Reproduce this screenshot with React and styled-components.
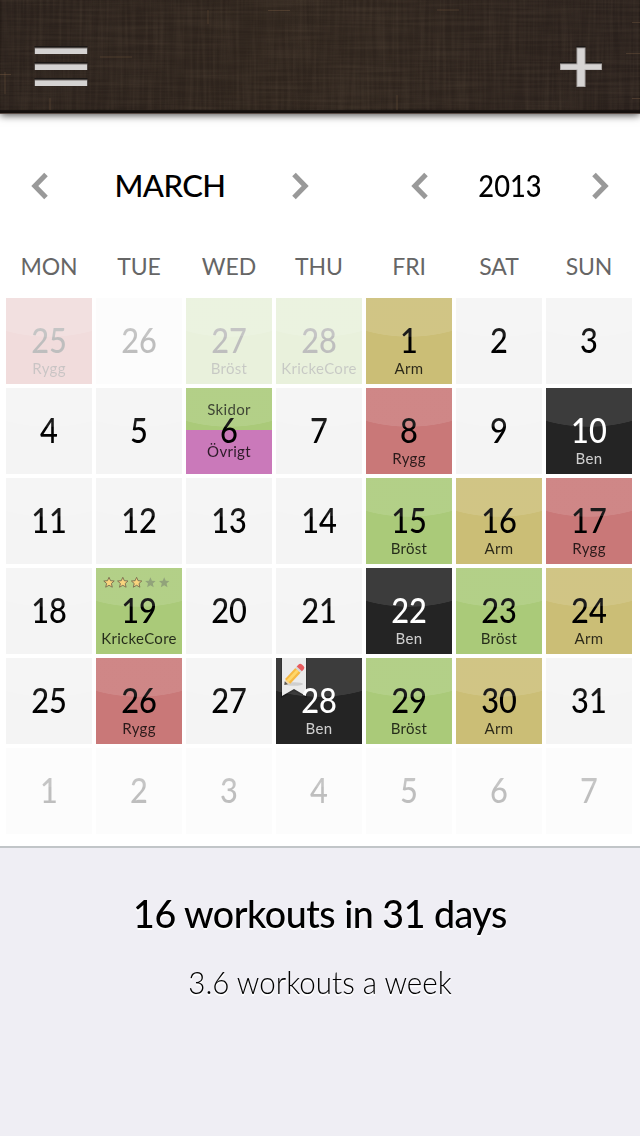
import React from 'react';
import styled, { createGlobalStyle, css } from 'styled-components';

const GlobalStyle = createGlobalStyle`
  body {
    margin: 0;
    background: #fff;
    font-family: Lato, 'Open Sans', sans-serif;
  }
`;

const COLORS = {
  red: '#c97878',
  green: '#aaca79',
  gold: '#cbbe76',
  black: '#242424',
  purple: '#ca79ba',
  none: '#f4f4f4',
};

const Page = styled.div`
  width: 640px;
  height: 1136px;
  display: flex;
  flex-direction: column;
  overflow: hidden;
`;

const Header = styled.header`
  position: relative;
  z-index: 1;
  box-sizing: border-box;
  height: 114px;
  flex: none;
  display: flex;
  align-items: flex-start;
  justify-content: space-between;
  padding: 46px 37px 0 34px;
  background: linear-gradient(90deg, #2a211c, #2e241d 40%, #2f251e 55%, #29201c);
  border-bottom: 1px solid #594c47;
  box-shadow: 0 1px 8px rgba(0, 0, 0, 0.75), inset 0 -3px 2px #15100e;
`;

const Texture = styled.svg`
  position: absolute;
  top: 0;
  left: 0;
`;

const HeaderIcon = styled.svg`
  position: relative;
`;

const Pickers = styled.div`
  height: 80px;
  margin-top: 32px;
  display: flex;
  justify-content: space-between;
`;

const Picker = styled.div`
  width: ${props => props.$width}px;
  display: grid;
  grid-template-columns: 80px 1fr 80px;
  align-items: center;
  justify-items: center;
`;

const PickerValue = styled.div`
  padding-bottom: 2px;
  font-size: 31px;
  line-height: 38px;
  font-weight: 500;
  letter-spacing: ${props => props.$spacing}px;
  white-space: nowrap;
  transform: scaleX(${props => props.$stretch || 1});
`;

const columns = css`
  display: grid;
  grid-template-columns: repeat(7, 86px);
  gap: 4px;
  padding-left: 6px;
`;

const Weekdays = styled.div`
  ${columns}
  height: 72px;
`;

const Weekday = styled.div`
  padding-top: 26px;
  font-size: 23px;
  line-height: 28px;
  letter-spacing: -0.1px;
  text-align: center;
  color: #666;
`;

const Days = styled.div`
  ${columns}
  grid-auto-rows: 86px;
  height: 548px;
  flex: none;
`;

const Cell = styled.div`
  position: relative;
  box-sizing: border-box;
  padding-top: 22px;
  text-align: center;
  background: ${props => props.$split
    ? `linear-gradient(${COLORS[props.$color]} 42px, ${COLORS[props.$split]} 42px)`
    : COLORS[props.$color]};
  color: ${props => props.$color === 'black' ? '#fff' : '#000'};
  opacity: ${props => props.$faded ? 0.25 : 1};

  &::after {
    content: '';
    position: absolute;
    inset: 0;
    background: radial-gradient(ellipse 100px 60px at 50% -21px, rgba(255, 255, 255, 0.11) 99%, transparent 100%);
  }
`;

const Num = styled.div`
  position: relative;
  font-size: 35px;
  line-height: 39px;
  font-weight: 500;
  transform: scaleX(0.88);
`;

const Label = styled.div`
  font-size: 15px;
  line-height: 18px;
  letter-spacing: 0.3px;
  opacity: 0.78;
`;

const SplitLabels = styled.div`
  position: absolute;
  inset: 12px 0 0;
  display: flex;
  flex-direction: column;
  gap: 24px;
`;

const Stars = styled.svg`
  position: absolute;
  top: 8px;
  left: 7px;
`;

const Ribbon = styled.svg`
  position: absolute;
  top: 0;
  left: 4px;
`;

const Summary = styled.section`
  flex: 1;
  border-top: 2px solid #c1c5c8;
  background: #efeef4;
  text-align: center;
  text-shadow: 0 2px 0 #fff;
`;

const Total = styled.div`
  margin-top: 41px;
  font-size: 39px;
  line-height: 48px;
  font-weight: 500;
  letter-spacing: -0.5px;
  transform: scaleX(0.963);
`;

const Average = styled.div`
  margin-top: 26px;
  font-size: 31px;
  line-height: 38px;
  font-weight: 300;
  transform: scaleX(0.953);
`;

const STAR = 'M0-5.2 1.5-1.8 5.2-1.5 2.4 1 3.3 4.7 0 2.8-3.3 4.7-2.4 1-5.2-1.5-1.5-1.8Z';

const WEEKDAYS = ['MON', 'TUE', 'WED', 'THU', 'FRI', 'SAT', 'SUN'];

const WORKOUTS = {
  1: ['gold', 'Arm'],
  6: ['green', 'Skidor', 'purple', 'Övrigt'],
  8: ['red', 'Rygg'],
  10: ['black', 'Ben'],
  15: ['green', 'Bröst'],
  16: ['gold', 'Arm'],
  17: ['red', 'Rygg'],
  19: ['green', 'KrickeCore'],
  22: ['black', 'Ben'],
  23: ['green', 'Bröst'],
  24: ['gold', 'Arm'],
  26: ['red', 'Rygg'],
  28: ['black', 'Ben'],
  29: ['green', 'Bröst'],
  30: ['gold', 'Arm'],
};

const days = [
  { day: 25, faded: true, workout: ['red', 'Rygg'] },
  { day: 26, faded: true },
  { day: 27, faded: true, workout: ['green', 'Bröst'] },
  { day: 28, faded: true, workout: ['green', 'KrickeCore'] },
  ...Array.from({ length: 31 }, (_, i) => ({
    day: i + 1,
    workout: WORKOUTS[i + 1],
    stars: i + 1 === 19 ? 3 : 0,
    note: i + 1 === 28,
  })),
  ...Array.from({ length: 7 }, (_, i) => ({ day: i + 1, faded: true })),
];

function Arrow({ right }) {
  return (
    <svg width="20" height="30" viewBox="0 0 20 30" fill="none" stroke="#999" strokeWidth="5">
      <path d={right ? 'M4 3.5 15.2 15 4 26.5' : 'M16 3.5 4.8 15 16 26.5'} />
    </svg>
  );
}

function HeaderTexture() {
  return (
    <Texture width="640" height="110" aria-hidden="true">
      <filter id="weft" x="0" y="0" width="100%" height="100%">
        <feTurbulence type="fractalNoise" baseFrequency="0.012 0.35" numOctaves="2" seed="4" />
        <feColorMatrix values="0 0 0 0 0.35  0 0 0 0 0.25  0 0 0 0 0.16  0.9 0 0 0 -0.3" />
      </filter>
      <filter id="warp" x="0" y="0" width="100%" height="100%">
        <feTurbulence type="fractalNoise" baseFrequency="0.3 0.015" numOctaves="2" seed="9" />
        <feColorMatrix values="0 0 0 0 0.35  0 0 0 0 0.25  0 0 0 0 0.16  0.9 0 0 0 -0.3" />
      </filter>
      <rect width="640" height="110" filter="url(#weft)" opacity="0.2" />
      <rect width="640" height="110" filter="url(#warp)" opacity="0.2" />
      <path
        d="M5 72v22M0 74.500h11M100 57h32M208 10v14M268 10.500h22M397 95v15M437 10h22M50 98v12M626 53.500h14M632 98.500h8M632 22.500h8"
        stroke="#8a6b4c"
        strokeOpacity="0.3"
      />
    </Texture>
  );
}

function MenuIcon() {
  return (
    <HeaderIcon width="54" height="42" viewBox="0 0 54 42">
      {[0, 16, 32].map(y => (
        <g key={y}>
          <path d={`M.5 ${y}h53v8H.5z`} fill="#1b1715" />
          <path d={`M.5 ${y + 1.5}h53V${y + 8}H.5z`} fill="#77716e" />
          <path d={`M1 ${y + 2.5}h52V${y + 8}H1z`} fill="#d5d3d2" />
        </g>
      ))}
    </HeaderIcon>
  );
}

function PlusIcon() {
  return (
    <HeaderIcon width="43" height="42" viewBox="0 0 43 42">
      <path d="M16.500 0h9v16h16.500v4H0v-4h16.500z" fill="#1b1715" />
      <path d="M16.500 1.500h9v16H42V24H25.500v17h-9V24H0v-6.500h16.500z" fill="#aaa6a4" />
      <path d="M17.500 2.500h7v16H41v5H24.500V40h-7V23.500H1v-5h16.500z" fill="#d6d4d3" />
    </HeaderIcon>
  );
}

function Rating({ value }) {
  return (
    <Stars width="70" height="13" viewBox="0 0 70 13">
      {[0, 1, 2, 3, 4].map(i => (
        <path
          key={i}
          d={STAR}
          transform={`translate(${6 + i * 13.8} 6.500)`}
          fill={i < value ? '#f8cf6e' : '#84986a'}
          stroke={i < value ? '#66593a' : 'none'}
          strokeWidth="0.9"
        />
      ))}
    </Stars>
  );
}

function NoteRibbon() {
  return (
    <Ribbon width="28" height="42" viewBox="0 0 28 42">
      <path d="M1 0h26v40L14 33 1 40z" fill="#000" opacity="0.3" />
      <path d="M2 0h24v38L14 31 2 38z" fill="#e9e9e9" />
      <ellipse cx="14" cy="26" rx="9" ry="1.800" fill="#bbb" opacity="0.7" />
      <g transform="translate(4.300 27) rotate(-47)">
        <path d="M0 0 6-3.600V3.600z" fill="#efd3a0" />
        <path d="M0 0 3-2.200V2.200z" fill="#444" />
        <path d="M5-3.600h15v7.200H5z" fill="#f5b02c" />
        <path d="M5-1.500h15v2.800H5z" fill="#ffd257" />
        <path d="M20-3.600h2v7.200h-2z" fill="#d3d3d3" />
        <path d="M22-3.600h2.500a2.500 2.500 0 0 1 2.500 2.500v2.200a2.500 2.500 0 0 1-2.500 2.500H22z" fill="#e5474a" />
      </g>
    </Ribbon>
  );
}

function Day({ day, faded, workout = [], stars, note }) {
  const [color = 'none', label, splitColor, splitLabel] = workout;
  return (
    <Cell $color={color} $split={splitColor} $faded={faded}>
      {note && <NoteRibbon />}
      {stars > 0 && <Rating value={stars} />}
      <Num>{day}</Num>
      {splitLabel ? (
        <SplitLabels>
          <Label>{label}</Label>
          <Label>{splitLabel}</Label>
        </SplitLabels>
      ) : (
        <Label>{label}</Label>
      )}
    </Cell>
  );
}

export default function App() {
  return (
    <Page>
      <GlobalStyle />
      <Header>
        <HeaderTexture />
        <MenuIcon />
        <PlusIcon />
      </Header>
      <Pickers>
        <Picker $width={340}>
          <Arrow />
          <PickerValue $spacing={-0.5}>MARCH</PickerValue>
          <Arrow right />
        </Picker>
        <Picker $width={260}>
          <Arrow />
          <PickerValue $spacing={0} $stretch={0.88}>2013</PickerValue>
          <Arrow right />
        </Picker>
      </Pickers>
      <Weekdays>
        {WEEKDAYS.map(name => <Weekday key={name}>{name}</Weekday>)}
      </Weekdays>
      <Days>
        {days.map((d, i) => <Day key={i} {...d} />)}
      </Days>
      <Summary>
        <Total>16 workouts in 31 days</Total>
        <Average>3.6 workouts a week</Average>
      </Summary>
    </Page>
  );
}
